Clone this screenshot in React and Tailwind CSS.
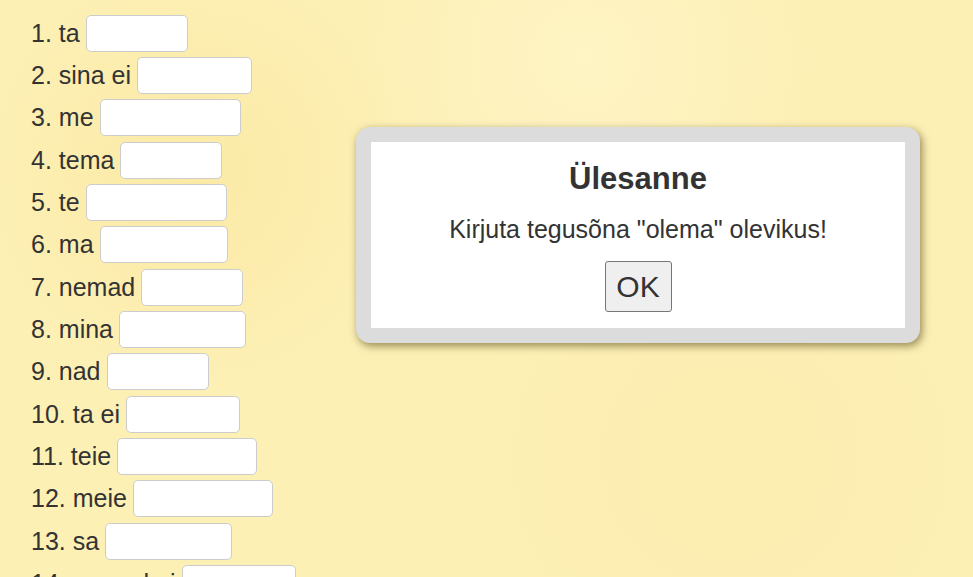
const ROWS = [
  { n: 1, word: 'ta', w: 102 },
  { n: 2, word: 'sina ei', w: 115 },
  { n: 3, word: 'me', w: 141 },
  { n: 4, word: 'tema', w: 102 },
  { n: 5, word: 'te', w: 141 },
  { n: 6, word: 'ma', w: 128 },
  { n: 7, word: 'nemad', w: 102 },
  { n: 8, word: 'mina', w: 127 },
  { n: 9, word: 'nad', w: 102 },
  { n: 10, word: 'ta ei', w: 114 },
  { n: 11, word: 'teie', w: 140 },
  { n: 12, word: 'meie', w: 140 },
  { n: 13, word: 'sa', w: 127 },
  { n: 14, word: 'nemad ei', w: 114 },
]

export default function App() {
  return (
    <div
      className="relative h-[577px] w-full overflow-hidden bg-[#fdf0b5] bg-[radial-gradient(circle_at_20%_30%,#fbeaa6_0,transparent_25%),radial-gradient(circle_at_75%_80%,#fcedb0_0,transparent_30%),radial-gradient(circle_at_60%_10%,#fef4c4_0,transparent_30%)] text-[#333]"
      style={{ fontFamily: '"Liberation Sans", Arial, sans-serif' }}
    >
      {/* Harjutuse read */}
      <div className="flex flex-col pt-[12px] pl-[31px]">
        {ROWS.map(r => (
          <div key={r.n} className="flex h-[42.33px] shrink-0 items-center gap-[6px]">
            <span className="text-[25px] leading-none">{r.n}. {r.word}</span>
            <input
              type="text"
              className="h-[37px] rounded-[5px] border border-[#cccccc] bg-white px-2 text-[25px] focus:outline-none"
              style={{ width: r.w }}
            />
          </div>
        ))}
      </div>

      {/* Dialoog */}
      <div className="absolute left-[356px] top-[127px] w-[564px] rounded-[14px] bg-[#dcdcdc] p-[15px] shadow-[2px_3px_9px_rgba(60,50,0,0.55)]">
        <div className="flex h-[186px] flex-col items-center bg-white">
          <h2 className="mt-[19px] text-[31px] font-bold leading-[36px]">Ülesanne</h2>
          <p className="mt-[17px] text-[25px] leading-[30px]">Kirjuta tegusõna "olema" olevikus!</p>
          <button
            type="button"
            className="mt-[17px] h-[51px] w-[67px] rounded-[3px] border border-[#767676] bg-[#efefef] text-[30px] leading-none text-[#333]"
          >
            OK
          </button>
        </div>
      </div>
    </div>
  )
}
